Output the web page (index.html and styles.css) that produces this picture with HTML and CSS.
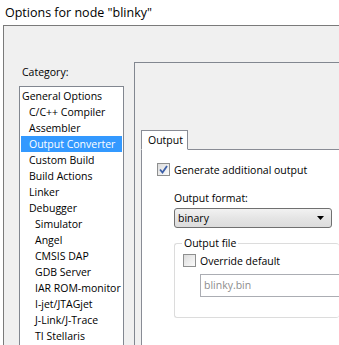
FILE: index.html
```html
<html>
    <head>
        <title>Options for node "blinky"</title>
        <link rel="stylesheet" href="styles.css">
    </head>
    <body>
        <div class="title">Options for node "blinky"</div>
        <div class="dialog">
            <div class="category">
                <div class="category-label">Category:</div>
                <ul class="tree">
                    <li class="lvl1">General Options</li>
                    <li class="lvl2">C/C++ Compiler</li>
                    <li class="lvl2">Assembler</li>
                    <li class="lvl2 selected">Output Converter</li>
                    <li class="lvl2">Custom Build</li>
                    <li class="lvl2">Build Actions</li>
                    <li class="lvl2">Linker</li>
                    <li class="lvl2">Debugger</li>
                    <li class="lvl3">Simulator</li>
                    <li class="lvl3">Angel</li>
                    <li class="lvl3">CMSIS DAP</li>
                    <li class="lvl3">GDB Server</li>
                    <li class="lvl3">IAR ROM-monitor</li>
                    <li class="lvl3">I-jet/JTAGjet</li>
                    <li class="lvl3">J-Link/J-Trace</li>
                    <li class="lvl3">TI Stellaris</li>
                </ul>
            </div>
            <div class="page">
                <div class="tabs">
                    <div class="tab">Output</div>
                </div>
                <div class="tab-panel">
                    <div class="check">
                        <span class="box checked">
                            <svg width="9" height="9" viewBox="0 0 9 9"><path d="M1 4.5 L3.5 7.5 L8 1" fill="none" stroke="#3c5fa8" stroke-width="1.8"/></svg>
                        </span>
                        <span>Generate additional output</span>
                    </div>
                    <div class="format">
                        <div class="field-label">Output format:</div>
                        <div class="select">
                            <span>binary</span>
                            <svg width="7" height="4" viewBox="0 0 7 4"><path d="M0 0 H7 L3.5 4 Z" fill="#000"/></svg>
                        </div>
                    </div>
                    <div class="group">
                        <div class="group-label">Output file</div>
                        <div class="check">
                            <span class="box"></span>
                            <span>Override default</span>
                        </div>
                        <div class="input">blinky.bin</div>
                    </div>
                </div>
            </div>
        </div>
    </body>
</html>
```

FILE: styles.css
```css
body {
    margin: 0;
    background-color: white;
    font-family: "Open Sans", "Liberation Sans", sans-serif;
    font-size: 10.5px;
    color: black;
    overflow: hidden;
    width: 339px;
    height: 345px;
}

.title {
    height: 25px;
    line-height: 25px;
    padding-left: 5px;
    font-size: 12.5px;
}

.dialog {
    display: flex;
    margin-left: 3px;
    height: 320px;
    box-sizing: border-box;
    padding-top: 36px;
    background-color: #f0f0f0;
    border-top: 1px solid #7a7a7a;
    border-left: 1px solid #7a7a7a;
    overflow: hidden;
}

.category {
    margin-left: 15px;
    margin-top: 2px;
    width: 105px;
    flex-shrink: 0;
    display: flex;
    flex-direction: column;
}

.category-label {
    line-height: 16px;
    padding-left: 3px;
}

.tree {
    list-style: none;
    margin: 6px 0 0 0;
    padding: 1px 0 0 0;
    flex-grow: 1;
    background-color: white;
    border: 1px solid #828790;
    border-bottom: none;
}

.tree li {
    height: 16px;
    line-height: 16px;
    white-space: nowrap;
}

.lvl1 {
    padding-left: 2px;
}

.lvl2 {
    padding-left: 9px;
}

.lvl3 {
    padding-left: 15px;
}

.tree li.selected {
    background-color: #3399ff;
    color: white;
    margin: 0 1px;
    padding-left: 8px;
}

.page {
    margin-left: 10px;
    flex-grow: 1;
    padding-top: 67px;
    padding-left: 6px;
    border-top: 1px solid #828790;
    border-left: 1px solid #828790;
    display: flex;
    flex-direction: column;
}

.tabs {
    display: flex;
    margin-bottom: -1px;
    position: relative;
}

.tab {
    height: 20px;
    line-height: 19px;
    padding-left: 6px;
    box-sizing: border-box;
    width: 47px;
    background-color: white;
    border: 1px solid #898c95;
    border-bottom: 1px solid white;
}

.tab-panel {
    flex-grow: 1;
    background-color: white;
    border-top: 1px solid #898c95;
    border-left: 1px solid #898c95;
    padding: 13px 0 0 15px;
}

.check {
    display: flex;
    align-items: center;
    height: 13px;
    gap: 4px;
    white-space: nowrap;
}

.box {
    width: 13px;
    height: 13px;
    box-sizing: border-box;
    border: 1px solid #8e8f8f;
    background: linear-gradient(135deg, #dcdcdc, #fbfbfb);
    display: flex;
    align-items: center;
    justify-content: center;
    flex-shrink: 0;
}

.format {
    margin-top: 14px;
    margin-left: 17px;
}

.field-label {
    line-height: 16px;
}

.select {
    margin-top: 2px;
    width: 158px;
    height: 20px;
    box-sizing: border-box;
    border: 1px solid #707070;
    border-radius: 3px;
    background: linear-gradient(#f2f2f2, #e5e5e5 50%, #dcdcdc);
    display: flex;
    align-items: center;
    justify-content: space-between;
    padding: 0 7px 0 3px;
}

.group {
    margin-top: 15px;
    margin-left: 17px;
    height: 73px;
    border: 1px solid #dcdcdc;
    border-radius: 3px;
    border-right: none;
    padding: 0 0 0 8px;
}

.group-label {
    margin-top: -9px;
    margin-left: -1px;
    padding: 0 2px;
    background-color: white;
    display: inline-block;
    line-height: 16px;
}

.group .check {
    margin-top: 3px;
}

.input {
    margin: 7px 0 0 17px;
    height: 23px;
    box-sizing: border-box;
    border: 1px solid #abadb3;
    border-right: none;
    color: #8d8d8d;
    line-height: 21px;
    padding-left: 3px;
}
```
